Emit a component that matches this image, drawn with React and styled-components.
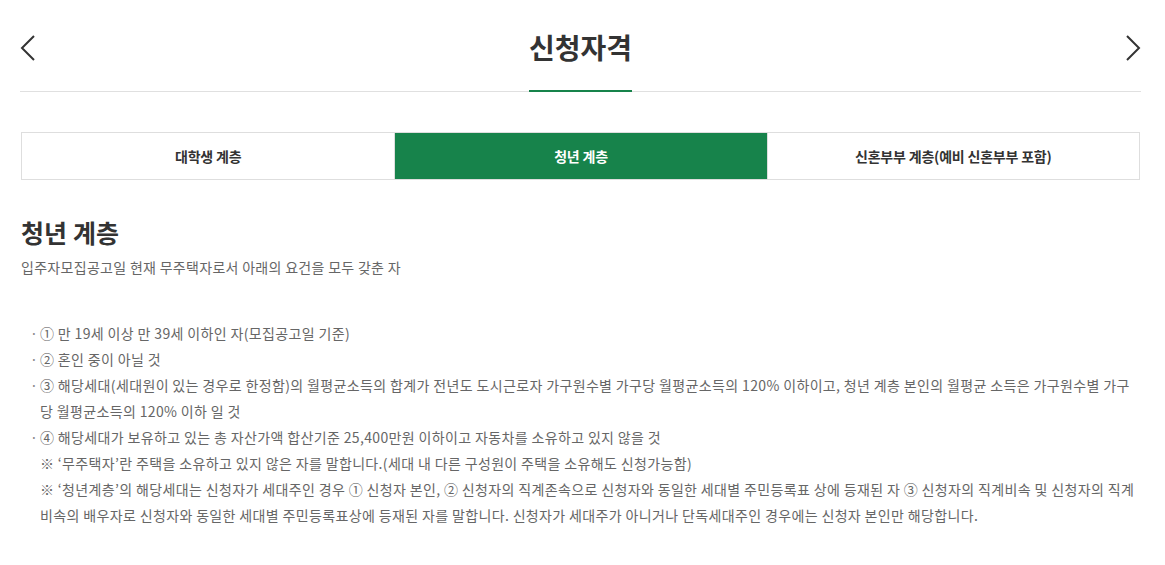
import React from "react";
import styled, { createGlobalStyle } from "styled-components";

const Global = createGlobalStyle`
  html, body { margin: 0; padding: 0; background: #fff; }
  body { font-family: "Noto Sans CJK KR", "Noto Sans", sans-serif; color: #333; }
  * { box-sizing: border-box; }
`;

const Page = styled.div`
  width: 1121px;
  margin-left: 20px;
`;

const Header = styled.header`
  height: 92px;
  display: flex;
  align-items: stretch;
  justify-content: space-between;
  border-bottom: 1px solid #e0e0e0;
`;

const NavButton = styled.button`
  border: 0;
  background: none;
  padding: 0;
  margin-top: 35px;
  width: 16px;
  height: 26px;
  align-self: flex-start;
  display: flex;
  justify-content: ${(p) => (p.$right ? "flex-end" : "flex-start")};
  cursor: pointer;
`;

const Title = styled.h1`
  margin: 0 0 -1px;
  align-self: flex-end;
  font-size: 28px;
  font-weight: 700;
  color: #333;
  letter-spacing: 0;
  line-height: 1;
  padding-bottom: 29px;
  border-bottom: 2px solid #17834b;
`;

const Tabs = styled.div`
  margin: 40px 1px 0;
  display: grid;
  grid-template-columns: repeat(3, 1fr);
  border: 1px solid #dedede;
`;

const Tab = styled.button`
  height: 46px;
  border: 0;
  border-left: ${(p) => (p.$first ? "0" : "1px solid #dedede")};
  background: ${(p) => (p.$active ? "#17834b" : "#fff")};
  color: ${(p) => (p.$active ? "#fff" : "#333")};
  font-family: inherit;
  font-size: 14px;
  font-weight: 700;
  letter-spacing: -0.2px;
  cursor: pointer;
`;

const Section = styled.section`
  padding: 0 1px;
  margin-top: 35px;
`;

const Heading = styled.h2`
  margin: 0;
  font-size: 25px;
  font-weight: 700;
  color: #333;
  line-height: 34px;
  letter-spacing: 0.1px;
`;

const Lead = styled.p`
  margin: 5px 0 0;
  font-size: 14px;
  color: #666;
  line-height: 26px;
  letter-spacing: 0.3px;
`;

const List = styled.ul`
  list-style: none;
  margin: 40px 0 0;
  padding: 0;
`;

const Item = styled.li`
  position: relative;
  padding-left: 19px;
  font-size: 14px;
  line-height: 26px;
  color: #666;
  letter-spacing: 0.36px;
  &::before {
    content: ${(p) => (p.$note ? "none" : '"·"')};
    position: absolute;
    left: 9px;
    top: 0;
    color: #888;
  }
`;

const Chevron = ({ dir }) => (
  <svg width="16" height="26" viewBox="0 0 16 26" fill="none">
    <path
      d={dir === "left" ? "M14 1 L2 13 L14 25" : "M2 1 L14 13 L2 25"}
      stroke="#333"
      strokeWidth="2"
    />
  </svg>
);

export default function App() {
  return (
    <>
      <Global />
      <Page>
        <Header>
          <NavButton aria-label="이전">
            <Chevron dir="left" />
          </NavButton>
          <Title>신청자격</Title>
          <NavButton $right aria-label="다음">
            <Chevron dir="right" />
          </NavButton>
        </Header>
        <Tabs>
          <Tab $first>대학생 계층</Tab>
          <Tab $active>청년 계층</Tab>
          <Tab>신혼부부 계층(예비 신혼부부 포함)</Tab>
        </Tabs>
        <Section>
          <Heading>청년 계층</Heading>
          <Lead>입주자모집공고일 현재 무주택자로서 아래의 요건을 모두 갖춘 자</Lead>
          <List>
            <Item>① 만 19세 이상 만 39세 이하인 자(모집공고일 기준)</Item>
            <Item>② 혼인 중이 아닐 것</Item>
            <Item>
              ③ 해당세대(세대원이 있는 경우로 한정함)의 월평균소득의 합계가 전년도 도시근로자 가구원수별 가구당 월평균소득의 120% 이하이고, 청년 계층 본인의 월평균 소득은 가구원수별 가구당 월평균소득의 120% 이하 일 것
            </Item>
            <Item>④ 해당세대가 보유하고 있는 총 자산가액 합산기준 25,400만원 이하이고 자동차를 소유하고 있지 않을 것</Item>
            <Item $note>※ ‘무주택자’란 주택을 소유하고 있지 않은 자를 말합니다.(세대 내 다른 구성원이 주택을 소유해도 신청가능함)</Item>
            <Item $note>
              ※ ‘청년계층’의 해당세대는 신청자가 세대주인 경우 ① 신청자 본인, ② 신청자의 직계존속으로 신청자와 동일한 세대별 주민등록표 상에 등재된 자 ③ 신청자의 직계비속 및 신청자의 직계비속의 배우자로 신청자와 동일한 세대별 주민등록표상에 등재된 자를 말합니다. 신청자가 세대주가 아니거나 단독세대주인 경우에는 신청자 본인만 해당합니다.
            </Item>
          </List>
        </Section>
      </Page>
    </>
  );
}
